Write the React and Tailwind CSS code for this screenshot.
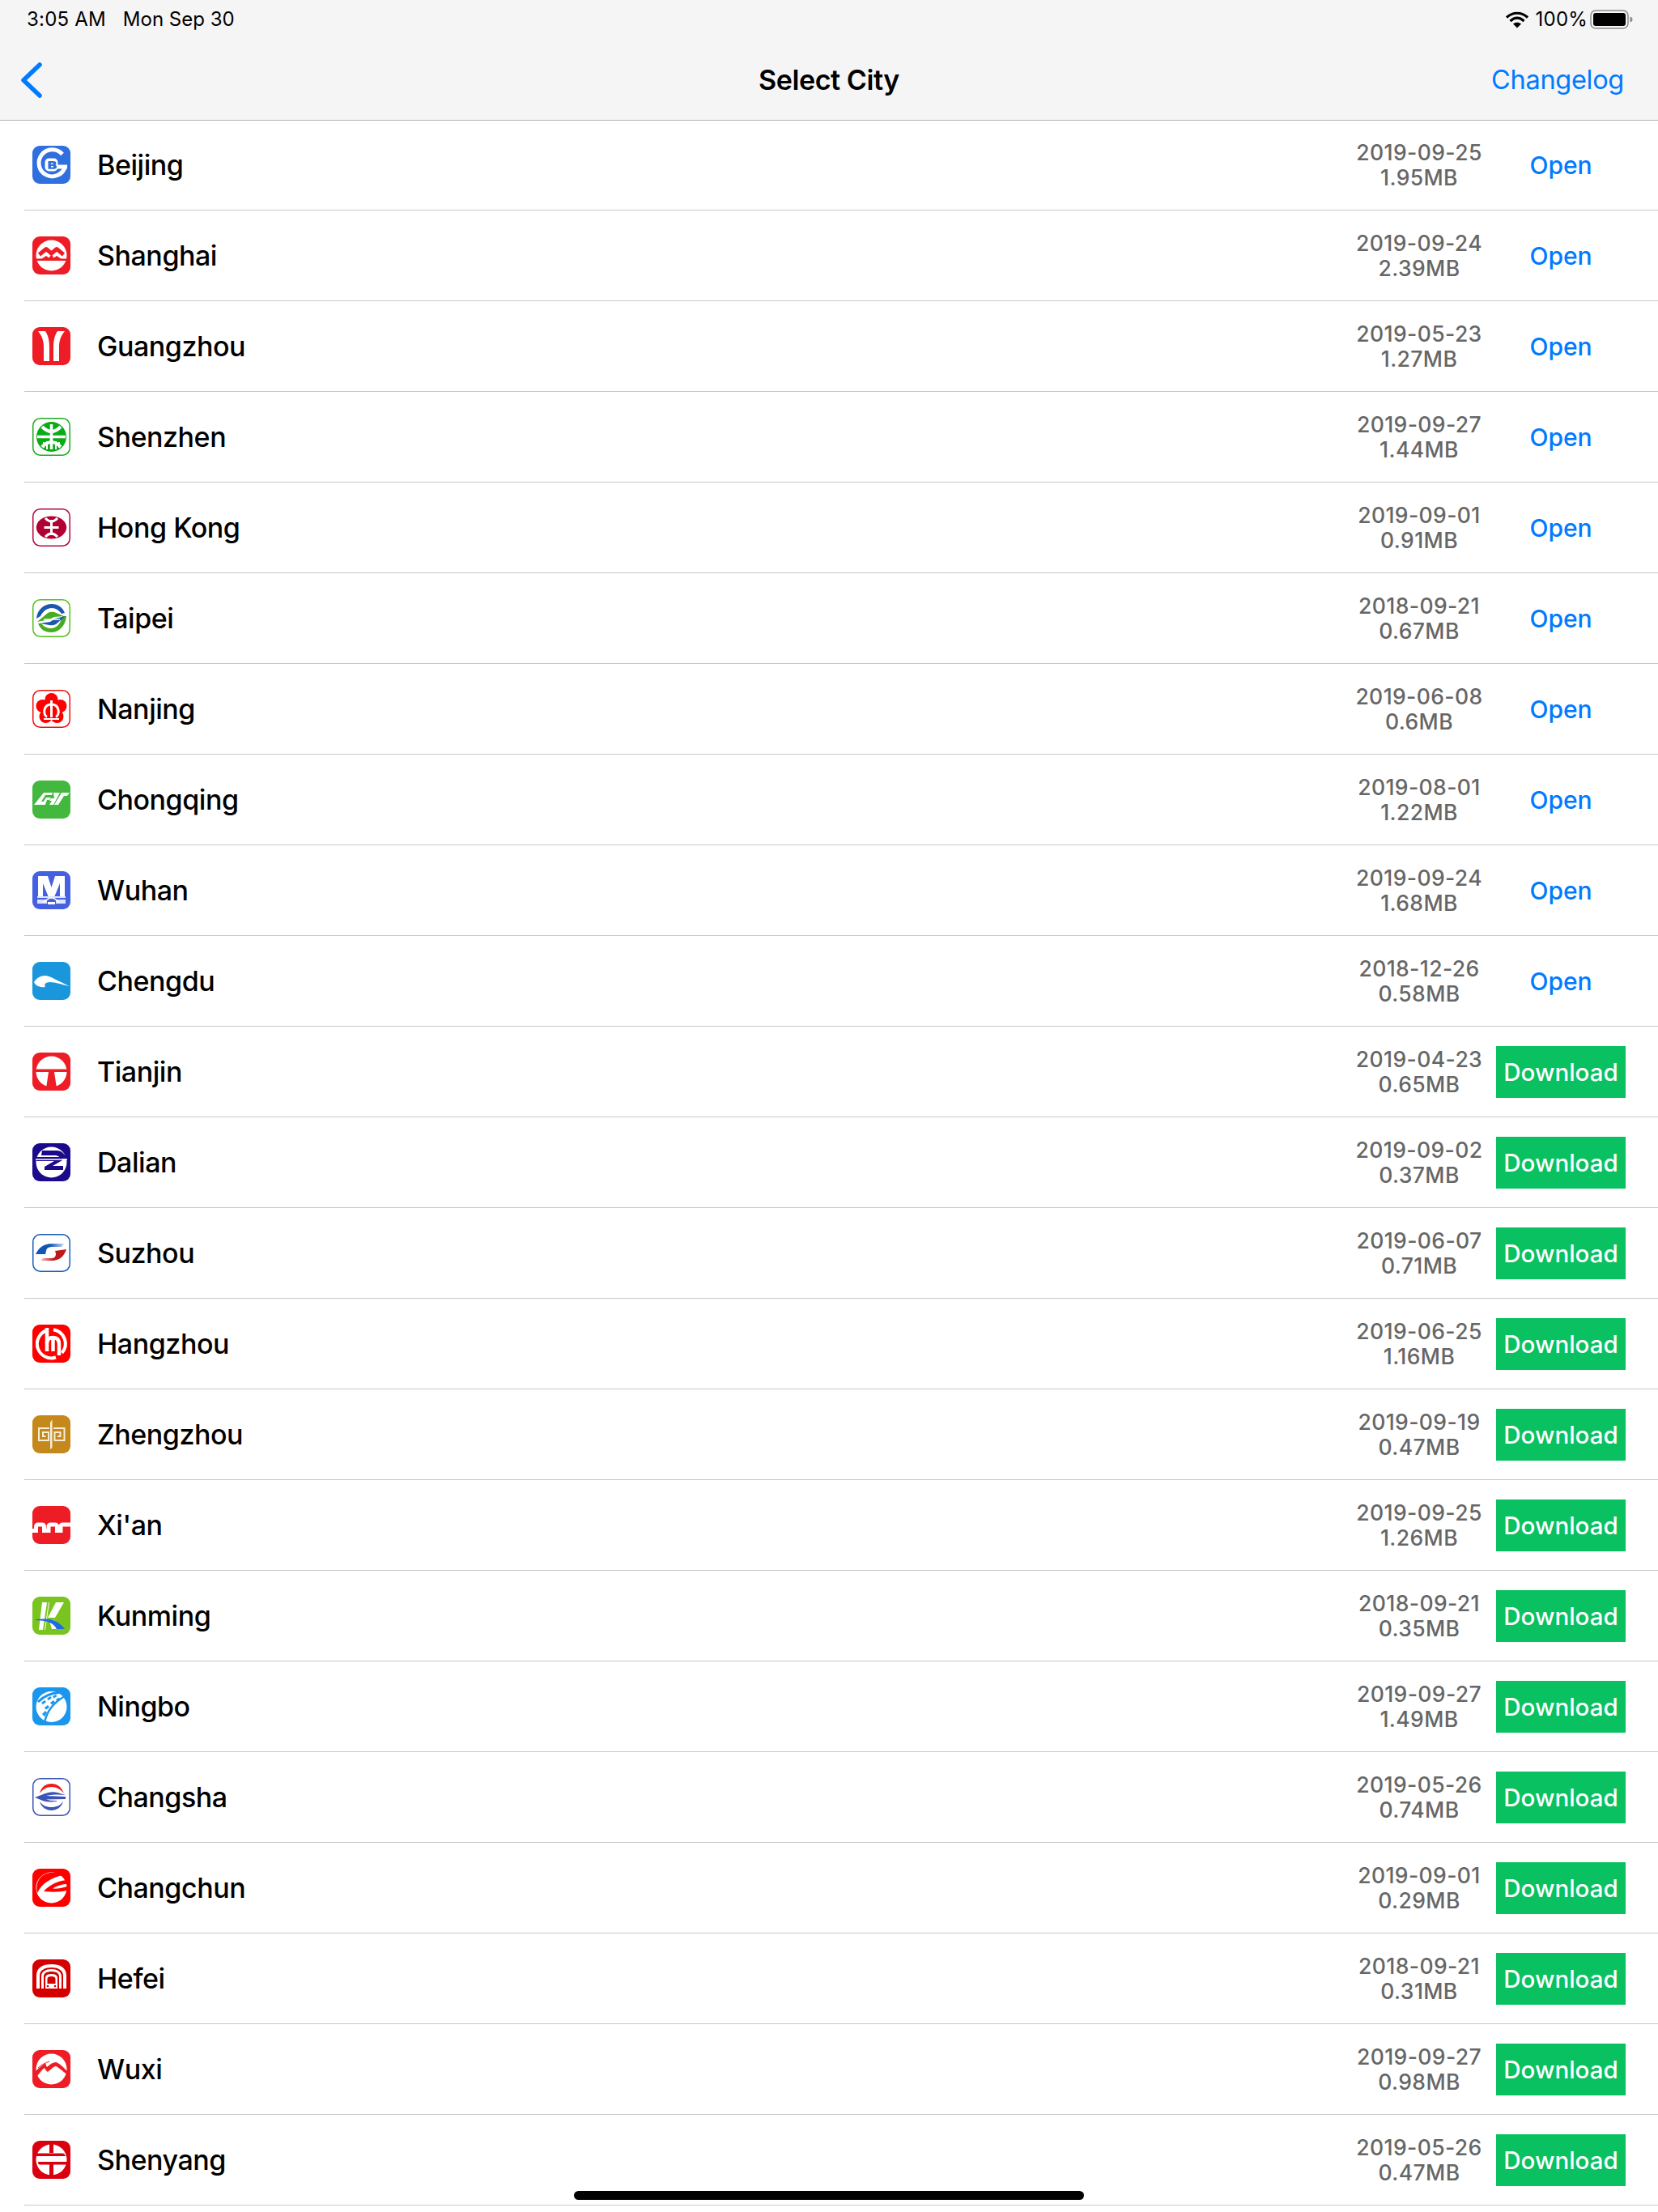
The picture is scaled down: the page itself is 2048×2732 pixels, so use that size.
import React from "react";

const W = "#fff";
function Base({ bg, border, children }) {
  return (
    <svg width="47" height="47" viewBox="0 0 47 47" className="block">
      <rect x={border ? 0.75 : 0} y={border ? 0.75 : 0} width={border ? 45.5 : 47} height={border ? 45.5 : 47} rx="9" fill={bg || "#fff"} stroke={border || "none"} strokeWidth={border ? 1.5 : 0} />
      {children}
    </svg>
  );
}

const icons = {
  beijing: (
    <Base bg="#2f6fde">
      <path d="M37 10.500A16.500 16.500 0 1 0 40.500 25.500" fill="none" stroke={W} strokeWidth="5" />
      <path d="M28 23.500h15v5H28z" fill={W} />
      <rect x="15.500" y="15.500" width="16" height="16" rx="5" fill={W} />
      <path d="M19.500 19h6.500q3.500 0 3.500 2.500 0 1.500-1 2.200 1.500.600 1.500 2.300 0 2.800-3.500 2.800h-7z" fill="#2f6fde" />
      <path d="M23 21.500h2.500v1.500H23zM23 25h3v1.500h-3z" fill={W} />
    </Base>
  ),
  shanghai: (
    <Base bg="#ee1c25">
      <circle cx="23.500" cy="23.500" r="19" fill={W} />
      <path d="M4 27.500h39v2.500H4z" fill="#ee1c25" />
      <path d="M8.500 22.500L17 15.500l6.500 5.500 6.500-5.500 8.500 7" fill="none" stroke="#ee1c25" strokeWidth="5" strokeLinejoin="round" />
      <path d="M11 28l6-4 3.500 2.500 3-4.500 3 4.500 3.500-2.500 6 4z" fill="#ee1c25" />
    </Base>
  ),
  guangzhou: (
    <Base bg="#ee1c25">
      <path d="M7 5h9c4 6 5 13 5 20v17h-7V25c0-8-2-14-7-20zM40 5h-9c-4 6-5 13-5 20v17h7V25c0-8 2-14 7-20z" fill={W} />
    </Base>
  ),
  shenzhen: (
    <Base border="#1faa1f">
      <circle cx="23.500" cy="23.500" r="18.500" fill="#0aab16" />
      <path d="M23.500 8v31M6 23.500h35" stroke={W} strokeWidth="3.500" />
      <path d="M12 11q11.500 12 23 0M12 36q11.500-12 23 0" stroke={W} strokeWidth="4" fill="none" />
      <path d="M14 30v7M18 29v10M29 29v10M33 30v7" stroke={W} strokeWidth="2" />
    </Base>
  ),
  hongkong: (
    <Base border="#b5073f">
      <ellipse cx="23.500" cy="23.500" rx="18.700" ry="14" fill="#b10034" />
      <path d="M23.500 14v19M14.500 23.500h18" stroke={W} strokeWidth="3" />
      <path d="M16 12q7.500 8 15 0M16 35q7.500-8 15 0" stroke={W} strokeWidth="3" fill="none" />
    </Base>
  ),
  taipei: (
    <Base border="#55c01c">
      <path d="M5 24C6 13 14 6 24 6c8 0 13 4 16 11l-4 1c-3-4-7-7-12-7-6 0-11 4-14 10z" fill="#1d56ad" />
      <path d="M42 21c-1 12-9 20-19 20-8 0-13-4-16-11h4c3 4 7 6 12 6 7 0 12-6 14-15z" fill="#47ad20" />
      <path d="M6 28l13-11q4-2 8-1l12 5-12 1-6 3z" fill="#47ad20" />
      <path d="M41 21L29 31q-4 2-8 1L9 30l13-2 6-4z" fill="#1d56ad" />
      <path d="M14 25h20" stroke={W} strokeWidth="1.500" />
    </Base>
  ),
  nanjing: (
    <Base border="#f01010">
      <g fill="#fe0000">
        <circle cx="23.500" cy="12" r="8" />
        <circle cx="34.500" cy="20" r="8" />
        <circle cx="30.500" cy="33" r="8" />
        <circle cx="16.500" cy="33" r="8" />
        <circle cx="12.500" cy="20" r="8" />
        <circle cx="23.500" cy="24" r="10" />
      </g>
      <path d="M18 33.500C13 31 13 18 23.500 18S34 31 29 33.500" fill="none" stroke={W} strokeWidth="3" />
      <path d="M23.500 13v21" stroke={W} strokeWidth="3" />
      <path d="M14 36h19" stroke={W} strokeWidth="2" />
    </Base>
  ),
  chongqing: (
    <Base bg="#43b83f">
      <path d="M14 15h11l-1 3h-8l-5 8h6l-1 4H2z" fill={W} />
      <path d="M13 27l4-6h6l-2 3h-3l-1 3z" fill={W} />
      <path d="M26 15h8l-8 15h-5l3-5h-3l2-3h4zM36 15h10l-3 4h-4l-7 11h-5z" fill={W} />
    </Base>
  ),
  wuhan: (
    <Base bg="#4560e0">
      <path d="M7 6h12l4.500 14L28 6h12v26h-6V15l-7 17h-7l-7-17v17H7z" fill={W} />
      <path d="M6 31h35v2H6zM6 35h12v5H6zM29 35h12v5H29z" fill="#dfe4fb" />
      <path d="M14 39q9.500-12 19 0" stroke={W} strokeWidth="1.500" fill="none" />
      <path d="M19 38h9v3h-9z" fill={W} />
    </Base>
  ),
  chengdu: (
    <Base bg="#1a96dc">
      <path d="M2 25C5 20 10 17 15.500 17C22 17 34 25 46 30C36 28 28 25 22 25C16 25 14 28 16 31C10 32 4 30 2 25z" fill={W} />
    </Base>
  ),
  tianjin: (
    <Base bg="#ee1c25">
      <circle cx="23.500" cy="23.500" r="19" fill={W} />
      <path d="M4 20.500h39v3.500H4z" fill="#ee1c25" />
      <path d="M20 24h7l3 20H17z" fill="#ee1c25" />
    </Base>
  ),
  dalian: (
    <Base bg="#1c0a8c">
      <circle cx="23.500" cy="23.500" r="19" fill={W} />
      <path d="M12 9h18c6 0 11 5 13 10h-8c-2-3-4-4-7-4H11z" fill="#1c0a8c" />
      <path d="M5 17h32v4L25 28h13v5H15v-4l12-7H5z" fill="#1c0a8c" />
      <path d="M4 20h39" stroke={W} strokeWidth="1.300" />
    </Base>
  ),
  suzhou: (
    <Base border="#1b5fb8">
      <defs>
        <linearGradient id="szb" x1="0" x2="1"><stop offset="0.500" stopColor="#1255b5" /><stop offset="1" stopColor="#c6d9f2" /></linearGradient>
        <linearGradient id="szr" x1="1" x2="0"><stop offset="0.500" stopColor="#c01818" /><stop offset="1" stopColor="#f4c8c8" /></linearGradient>
      </defs>
      <path d="M4 25C8 17 14 12 24 12h15l-3 4H24c-5 0-7 3-7 5l-1 4z" fill="url(#szb)" />
      <path d="M42 19C39 28 33 33 24 33H10l3-3h11c4 0 5-3 5-6l-1-3 14-2z" fill="url(#szr)" />
    </Base>
  ),
  hangzhou: (
    <Base bg="#fe0000">
      <path d="M18 7A17.500 17.500 0 0 0 29 40.500" fill="none" stroke={W} strokeWidth="4" />
      <path d="M26 6.200A17.500 17.500 0 0 1 36.500 35" fill="none" stroke={W} strokeWidth="4" />
      <path d="M18 4v29M25.500 17v16" stroke={W} strokeWidth="4.500" fill="none" />
      <path d="M18 23C18 17 22 16 25.500 16C30 16 33 18 33 24V38" stroke={W} strokeWidth="4.500" fill="none" />
    </Base>
  ),
  zhengzhou: (
    <Base bg="#c4881b">
      <path d="M22 35V9l2.500-4v35L22 42z" fill="#f8eed8" />
      <path d="M21 16H8v15h12v-10h-7v5h3.500M26 16h13.500v15H27.500v-10h7v5H31" fill="none" stroke="#f8eed8" strokeWidth="2" />
    </Base>
  ),
  xian: (
    <Base bg="#ee1c25">
      <path d="M0 30.500h4.500V26Q4.500 23 7 23h5q2.500 0 2.500 3v4.500H20V26q0-3 2.500-3H28q2.500 0 2.500 3v4.500H35V26q0-3 2.500-3H47" fill="none" stroke={W} strokeWidth="5" />
    </Base>
  ),
  kunming: (
    <Base bg="#7ac41f">
      <path d="M12 7h6l-5 34H8zM20 7h1l-5 34h-1z" fill={W} />
      <path d="M39 7h-10L19 26h9z" fill={W} />
      <path d="M21 30l6-1 9 11H24z" fill={W} />
      <path d="M4 28c12-1 26-2 36 12H30c-3-6-8-10-26-11z" fill="#1f6ce0" />
    </Base>
  ),
  ningbo: (
    <Base bg="#1a96ec">
      <circle cx="23.500" cy="24" r="19" fill={W} />
      <path d="M15 44C17 32 24 20 40 11" fill="none" stroke="#1a96ec" strokeWidth="2.500" />
      <path d="M7 18C13 12 22 7 33 6.500" fill="none" stroke="#1a96ec" strokeWidth="3" />
      <path d="M11 19l4-3 2 2-4 3zM18 14l4-3 2 2-4 3zM25 11l4-2 1.500 2-4 2.500zM15 25l4-3 2 2.500-4 3zM22 19l4-3 2 2.500-4 3zM29 15l4-2.500 1.500 2.500-4 2.500zM12 33l4-4 2 2-3 5z" fill="#1a96ec" />
    </Base>
  ),
  changsha: (
    <Base border="#3c55b4">
      <path d="M9 19C11 11 16 7 23.500 7S36 11 39 19c-4-5-9-8-15.500-8S13 14 9 19z" fill="#f01c1c" />
      <path d="M3 24l13-5q8-3 15-1l10 3-10-.5q-8-.5-14 1.500l24 1v3l-24 .5q6 2 14 1.500l-2 1q-8 1-15-.5z" fill="#3c55b4" />
      <path d="M9 29c2 7 8 11 14.500 11S36 36 38 29c-4 5-8 7-14.500 7S13 34 9 29z" fill="#3c55b4" />
    </Base>
  ),
  changchun: (
    <Base bg="#fe0000">
      <circle cx="23.500" cy="23.500" r="19" fill={W} />
      <path d="M38 8C26 10 12 17 6 30C4 22 6 14 12 9 18 4 30 3 38 8z" fill="#fe0000" />
      <path d="M43 14C32 15 22 19 14 28C22 29 34 29 43 27V22C36 24 30 25 25 24.500C30 21 37 19 44 19z" fill="#fe0000" />
    </Base>
  ),
  hefei: (
    <Base bg="#d40000">
      <path d="M5 36V20C5 10 13 6 23.500 6S42 10 42 20v16h-4V20c0-7-7-10-14.500-10S9 13 9 20v16z" fill={W} />
      <path d="M11 36V21c0-6 6-9 12.500-9S36 15 36 21v15h-3V21c0-4-4-6-9.500-6S14 17 14 21v15z" fill={W} />
      <path d="M16 36V23q0-5 7.500-5T31 23v13z" fill={W} />
      <path d="M18.500 24q0-3 5-3t5 3v6h-10z" fill="#d40000" />
      <circle cx="19" cy="33" r="1.300" fill="#d40000" />
      <circle cx="28" cy="33" r="1.300" fill="#d40000" />
    </Base>
  ),
  wuxi: (
    <Base bg="#ee1c25">
      <circle cx="23.500" cy="23.500" r="19" fill={W} />
      <path d="M4 26C8 22 12 19 16 16C17 18 17 20 18 21C22 17 26 15 29 15C33 16 38 21 43 26L43 30C37 26 32 21 29 20C26 20 23 24 19 27C17 26 16 24 15 22C11 25 8 30 5 33z" fill="#ee1c25" />
      <path d="M7 22c4-4 9-6 14-8" stroke="#ee1c25" strokeWidth="1" fill="none" />
    </Base>
  ),
  shenyang: (
    <Base bg="#da0010">
      <circle cx="23.500" cy="23.500" r="19" fill={W} />
      <path d="M21 4h5v11h-5zM21 29h5v15h-5z" fill="#da0010" />
      <path d="M4 15.500h33q3 0 4 3.500H4zM7 26h36v3.500H9q-2 0-2-3.500z" fill="#da0010" />
    </Base>
  ),
};

const rows = [
  ["beijing", "Beijing", "2019-09-25", "1.95MB", 1],
  ["shanghai", "Shanghai", "2019-09-24", "2.39MB", 1],
  ["guangzhou", "Guangzhou", "2019-05-23", "1.27MB", 1],
  ["shenzhen", "Shenzhen", "2019-09-27", "1.44MB", 1],
  ["hongkong", "Hong Kong", "2019-09-01", "0.91MB", 1],
  ["taipei", "Taipei", "2018-09-21", "0.67MB", 1],
  ["nanjing", "Nanjing", "2019-06-08", "0.6MB", 1],
  ["chongqing", "Chongqing", "2019-08-01", "1.22MB", 1],
  ["wuhan", "Wuhan", "2019-09-24", "1.68MB", 1],
  ["chengdu", "Chengdu", "2018-12-26", "0.58MB", 1],
  ["tianjin", "Tianjin", "2019-04-23", "0.65MB", 0],
  ["dalian", "Dalian", "2019-09-02", "0.37MB", 0],
  ["suzhou", "Suzhou", "2019-06-07", "0.71MB", 0],
  ["hangzhou", "Hangzhou", "2019-06-25", "1.16MB", 0],
  ["zhengzhou", "Zhengzhou", "2019-09-19", "0.47MB", 0],
  ["xian", "Xi'an", "2019-09-25", "1.26MB", 0],
  ["kunming", "Kunming", "2018-09-21", "0.35MB", 0],
  ["ningbo", "Ningbo", "2019-09-27", "1.49MB", 0],
  ["changsha", "Changsha", "2019-05-26", "0.74MB", 0],
  ["changchun", "Changchun", "2019-09-01", "0.29MB", 0],
  ["hefei", "Hefei", "2018-09-21", "0.31MB", 0],
  ["wuxi", "Wuxi", "2019-09-27", "0.98MB", 0],
  ["shenyang", "Shenyang", "2019-05-26", "0.47MB", 0],
];

function Row({ icon, name, date, size, open }) {
  return (
    <div className="flex items-center h-[112px] ml-[30px] border-b border-[#c8c8c8]">
      <div className="ml-[10px] w-[47px] h-[47px] shrink-0">{icons[icon]}</div>
      <div className="ml-[33px] flex-1 text-[34px] leading-[40px] text-black font-[450] tracking-[-0.45px]">{name}</div>
      <div className="w-[190px] text-center text-[26.500px] leading-[31px] font-[450] tracking-[0.4px] text-[#666]">
        <div>{date}</div>
        <div>{size}</div>
      </div>
      <div className="w-[160px] mr-[40px] flex justify-center">
        {open ? (
          <span className="text-[30px] leading-[64px] font-medium text-[#007aff]">Open</span>
        ) : (
          <span className="w-[160px] h-[64px] pt-[1px] flex items-center justify-center bg-[#09c160] text-white text-[29.500px] font-[450]">Download</span>
        )}
      </div>
    </div>
  );
}

export default function App() {
  return (
    <div className="relative w-[2048px] h-[2732px] overflow-hidden bg-white font-['Inter','Liberation_Sans',sans-serif]">
      <header className="h-[149px] bg-[#f5f5f5] border-b border-[#b2b2b2] flex flex-col">
        <div className="h-[48px] flex items-center pl-[33px] pr-[30px] text-[24px] text-black">
          <span className="tracking-[0.2px]">3:05 AM</span>
          <span className="ml-[21px]">Mon Sep 30</span>
          <span className="flex-1" />
          <svg width="28" height="21" viewBox="0 0 28 21" className="mr-[9px]">
            <path d="M1 7.500C8.500 0.500 19.500 0.500 27 7.500" fill="none" stroke="#000" strokeWidth="3.200" />
            <path d="M5.500 12C11 7 17 7 22.500 12" fill="none" stroke="#000" strokeWidth="3.200" />
            <path d="M14 20.500L9 15.500C12 13 16 13 19 15.500z" fill="#000" />
          </svg>
          <span className="tracking-[0.2px]">100%</span>
          <svg width="54" height="24" viewBox="0 0 54 24" className="ml-[3px]">
            <rect x="1" y="1" width="46" height="22" rx="6" fill="none" stroke="#8a8a8a" strokeWidth="1.500" />
            <rect x="4" y="4" width="40" height="16" rx="3" fill="#000" />
            <path d="M49.500 8.500q3 1 3 3.500t-3 3.500z" fill="#8a8a8a" />
          </svg>
        </div>
        <div className="flex-1 grid grid-cols-[1fr_auto_1fr] items-center px-[42px] pt-[1px]">
          <svg width="26" height="44" viewBox="0 0 26 44" className="-ml-[16px]">
            <path d="M23 3L3 22l20 19" fill="none" stroke="#007aff" strokeWidth="5.500" strokeLinecap="round" strokeLinejoin="round" />
          </svg>
          <div className="text-[34px] leading-[40px] font-semibold text-black tracking-[-0.4px]">Select City</div>
          <div className="text-right text-[32.500px] leading-[40px] text-[#007aff] tracking-[-0.3px]">Changelog</div>
        </div>
      </header>
      <div className="-mt-[1px]">
        {rows.map((r) => (
          <Row key={r[0]} icon={r[0]} name={r[1]} date={r[2]} size={r[3]} open={r[4]} />
        ))}
      </div>
      <div className="absolute left-[709px] top-[2706px] w-[630px] h-[11px] rounded-full bg-black" />
    </div>
  );
}
